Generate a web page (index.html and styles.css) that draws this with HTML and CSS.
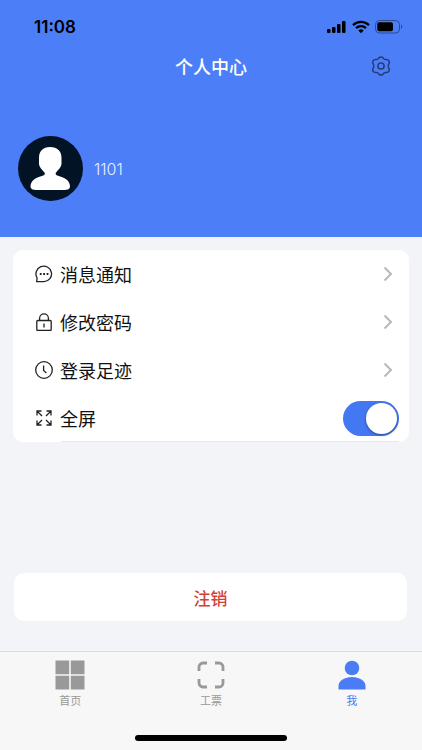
FILE: index.html
```
<!DOCTYPE html>
<html lang="zh-CN">
  <head>
    <meta charset="UTF-8" />
    <meta name="viewport" content="width=device-width, initial-scale=1.0" />
    <title>个人中心</title>
    <link rel="stylesheet" href="styles.css">
  </head>
  <body>
    <header class="header">
      <div class="status-bar">
        <span class="time">11:08</span>
        <div class="status-icons">
          <svg width="20" height="14" viewBox="0 0 20 14">
            <rect x="0" y="9" width="3.5" height="4" rx="1" />
            <rect x="5" y="7" width="3.5" height="6" rx="1" />
            <rect x="10" y="4" width="3.5" height="9" rx="1" />
            <rect x="15" y="1" width="3.5" height="12" rx="1" />
          </svg>
          <svg width="18" height="14" viewBox="0 0 18 14" fill="none" stroke="#000" stroke-width="2.3">
            <path d="M1 5.1a11.6 11.6 0 0 1 16 0" />
            <path d="M4 8.2a7.2 7.2 0 0 1 10 0" />
            <path d="M9 13.2l-2.7-2.8a4 4 0 0 1 5.4 0z" fill="#000" stroke="none" />
          </svg>
          <svg width="28" height="14" viewBox="0 0 28 14">
            <rect x="0.5" y="0.5" width="24" height="12.5" rx="4" fill="none" stroke="#2c4a92" />
            <rect x="2.3" y="2.3" width="15.7" height="9" rx="2" />
            <path d="M26 4.6c1.7.6 1.7 3.8 0 4.4z" fill="#2c4a92" />
          </svg>
        </div>
      </div>

      <div class="nav-bar">
        <h1 class="title">个人中心</h1>
        <button class="settings" type="button" aria-label="设置">
          <svg width="20" height="20" viewBox="0 0 20 20" fill="none" stroke="#263b78" stroke-width="1.5" stroke-linejoin="round">
            <path d="M8.3 1.5Q10 .5 11.7 1.5L13 3q.8.7 1.9.6l1.7.1q1.6.8 1.8 2.7l-.8 1.9q-.6 1.7 0 3.4l.8 1.9q-.2 1.9-1.8 2.7l-1.7.1q-1.1-.1-1.9.6l-1.3 1.5q-1.7 1-3.4 0L7 17q-.8-.7-1.9-.6l-1.7-.1q-1.6-.8-1.8-2.7l.8-1.9q.6-1.7 0-3.4l-.8-1.9q.2-1.9 1.8-2.7l1.7-.1Q6.200 3.700 7 3z" />
            <circle cx="10" cy="10" r="3.1" />
          </svg>
        </button>
      </div>

      <div class="profile">
        <svg class="avatar" viewBox="0 0 65 65">
          <circle cx="32.5" cy="32.5" r="32.5" fill="#021326" />
          <path d="M32 11c7.500 0 11.500 4 11.500 11v5.500c0 3.500-3 6-5.500 9-1 1.500 0 2.500 2 3.300 3 1.200 6 1.700 8.500 3.700 2.300 1.800 3.500 4.500 3.500 7s-2 3.500-6 3.500H18.500c-4 0-6-1-6-3.500s1.200-5.200 3.500-7c2.500-2 5.500-2.500 8.500-3.700 2-.8 3-1.800 2-3.300-2.500-3-5.500-5.500-5.500-9V22c0-7 4-11 11-11z" fill="#fff" />
        </svg>
        <span class="username">1101</span>
      </div>
    </header>

    <main class="content">
      <div class="menu">
        <a class="menu-item" href="#messages">
          <svg class="menu-icon" viewBox="0 0 18 18">
            <path d="M1.700 16.700L2.100 13A7.800 7.800 0 1 1 9 16.700z" />
            <path d="M4.800 9h1.800M8.200 9H10M11.600 9h1.800" stroke-width="1.9" />
          </svg>
          <span>消息通知</span>
          <svg class="arrow" viewBox="0 0 10 16"><path d="M1.500 1.500L8 8l-6.500 6.500" /></svg>
        </a>
        <a class="menu-item" href="#password">
          <svg class="menu-icon" viewBox="0 0 18 18">
            <rect x="1.8" y="7.5" width="14.4" height="10" rx="1" />
            <path d="M4.600 7.500V5.300a4.400 4.400 0 0 1 8.800 0v2.200M9 10.500v4" />
          </svg>
          <span>修改密码</span>
          <svg class="arrow" viewBox="0 0 10 16"><path d="M1.500 1.500L8 8l-6.500 6.500" /></svg>
        </a>
        <a class="menu-item" href="#history">
          <svg class="menu-icon" viewBox="0 0 18 18">
            <circle cx="9" cy="9" r="8.3" />
            <path d="M8.600 4.500v5l2.800 2.500" />
          </svg>
          <span>登录足迹</span>
          <svg class="arrow" viewBox="0 0 10 16"><path d="M1.500 1.500L8 8l-6.500 6.500" /></svg>
        </a>
        <div class="menu-item">
          <svg class="menu-icon" viewBox="0 0 18 18">
            <path d="M2 6.500V2h4.500M2 2l5 5M11.500 2H16v4.500M16 2l-5 5M2 11.500V16h4.500M2 16l5-5M11.500 16H16v-4.500M16 16l-5-5" />
          </svg>
          <label for="fullscreen">全屏</label>
          <input class="switch" id="fullscreen" type="checkbox" role="switch" checked />
        </div>
      </div>

      <button class="logout" type="button">注销</button>
    </main>

    <nav class="tab-bar">
      <div class="tabs">
        <a class="tab" href="#home">
          <svg class="tab-icon" viewBox="0 0 30 30" fill="currentColor">
            <path d="M.5.5h13.700v13.700H.5zM15.800.5h13.700v13.700H15.800zM.5 15.800h13.700v13.700H.5zM15.800 15.800h13.700v13.700H15.800z" />
          </svg>
          <span>首页</span>
        </a>
        <a class="tab" href="#ticket">
          <svg class="tab-icon" viewBox="0 0 30 30" fill="none" stroke="currentColor" stroke-width="2.8">
            <path d="M3 11V7a4 4 0 0 1 4-4h4M19 3h4a4 4 0 0 1 4 4v4M27 19v4a4 4 0 0 1-4 4h-4M11 27H7a4 4 0 0 1-4-4v-4" />
          </svg>
          <span>工票</span>
        </a>
        <a class="tab active" href="#me">
          <svg class="tab-icon" viewBox="0 0 30 30" fill="currentColor">
            <circle cx="15" cy="8" r="7.3" />
            <path d="M1.500 29.500V26C1.500 20.500 8 17 15 17s13.500 3.500 13.500 9v3.500z" />
          </svg>
          <span>我</span>
        </a>
      </div>
      <div class="home-indicator"></div>
    </nav>
  </body>
</html>
```
FILE: styles.css
```
* {
  box-sizing: border-box;
}

body {
  margin: 0;
  min-height: 100vh;
  display: flex;
  flex-direction: column;
  background-color: #f3f4f7;
  font-family: "Noto Sans CJK SC", sans-serif;
  color: #111;
}

a {
  color: inherit;
  text-decoration: none;
}

button {
  border: none;
  font-family: inherit;
  cursor: pointer;
}

svg {
  display: block;
  flex-shrink: 0;
}

/* Header */
.header {
  background-color: #4c7ff7;
  padding-bottom: 36px;
}

.status-bar {
  display: flex;
  justify-content: space-between;
  align-items: center;
  height: 44px;
  padding: 10px 19px 0 34px;
}

.time {
  font-family: Inter, sans-serif;
  font-size: 17px;
  font-weight: 600;
  color: #000;
}

.status-icons {
  display: flex;
  align-items: center;
  gap: 5px;
}

.nav-bar {
  display: grid;
  grid-template-columns: 1fr auto 1fr;
  align-items: center;
  height: 44px;
  padding: 0 31px;
}

.title {
  grid-column: 2;
  margin: 0;
  font-size: 18px;
  font-weight: 500;
  color: #fff;
}

.settings {
  justify-self: end;
  padding: 0;
  background: none;
}

.profile {
  display: flex;
  align-items: center;
  gap: 11px;
  padding: 48px 18px 0;
}

.avatar {
  width: 65px;
  height: 65px;
}

.username {
  font-family: Inter, sans-serif;
  font-size: 16px;
  font-weight: 300;
  color: #e9effe;
}

/* Menu card */
.content {
  flex: 1;
  display: flex;
  flex-direction: column;
  padding: 13px 13px 30px;
}

.menu {
  background-color: #fff;
  border-radius: 10px;
}

.menu-item {
  display: flex;
  align-items: center;
  gap: 7px;
  height: 48px;
  padding: 0 10px 0 22px;
  font-size: 18px;
  line-height: 24px;
}

/* thin divider under the last label */
.menu-item:last-child {
  background: linear-gradient(#e6e7ea, #e6e7ea) 48px 100% / calc(100% - 58px) 1px no-repeat;
}

.menu-icon {
  width: 18px;
  height: 18px;
  fill: none;
  stroke: #222;
  stroke-width: 1.3;
}

.arrow {
  width: 10px;
  height: 16px;
  margin-left: auto;
  margin-right: 6px;
  fill: none;
  stroke: #b8b8b8;
  stroke-width: 2;
}

.switch {
  appearance: none;
  width: 56px;
  height: 35px;
  margin: 0 0 0 auto;
  padding: 2px;
  border-radius: 18px;
  background-color: #d8d8d8;
  display: flex;
  cursor: pointer;
}

.switch::before {
  content: "";
  width: 31px;
  height: 31px;
  border-radius: 50%;
  background-color: #fff;
  box-shadow: 0 1px 3px rgba(0, 0, 0, 0.4);
}

.switch:checked {
  justify-content: flex-end;
  background-color: #4478f2;
}

.logout {
  height: 48px;
  margin: auto 2px 0 1px;
  border-radius: 10px;
  background-color: #fff;
  font-size: 17px;
  font-weight: 500;
  color: #d3403a;
}

/* Bottom tabs */
.tab-bar {
  border-top: 1px solid #dcdcde;
  background-color: #f7f7f7;
  padding: 8px 0 9px;
}

.tabs {
  display: grid;
  grid-template-columns: repeat(3, 1fr);
}

.tab {
  display: flex;
  flex-direction: column;
  align-items: center;
  gap: 2px;
  font-size: 11px;
  line-height: 16px;
  color: #999;
}

.tab.active {
  color: #4a7df5;
}

.tab-icon {
  width: 30px;
  height: 30px;
}

.home-indicator {
  width: 36%;
  height: 6px;
  margin: 27px auto 0;
  border-radius: 3px;
  background-color: #000;
}
```
